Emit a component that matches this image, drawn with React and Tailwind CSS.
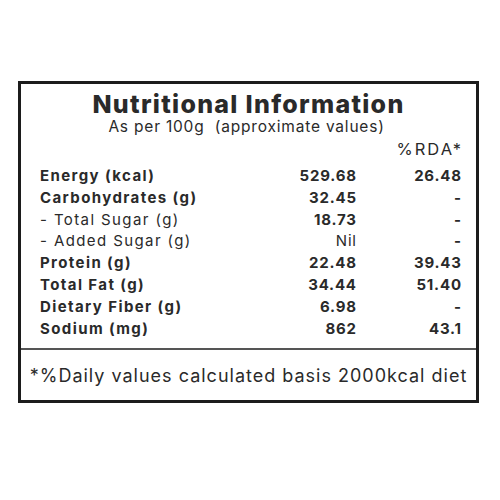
import React from 'react';

const rows = [
  { label: 'Energy (kcal)', value: '529.68', rda: '26.48', bold: true },
  { label: 'Carbohydrates (g)', value: '32.45', rda: '-', bold: true },
  { label: '- Total Sugar (g)', value: '18.73', rda: '-', bold: false },
  { label: '- Added Sugar (g)', value: 'Nil', rda: '-', bold: false },
  { label: 'Protein (g)', value: '22.48', rda: '39.43', bold: true },
  { label: 'Total Fat (g)', value: '34.44', rda: '51.40', bold: true },
  { label: 'Dietary Fiber (g)', value: '6.98', rda: '-', bold: true },
  { label: 'Sodium (mg)', value: '862', rda: '43.1', bold: true },
];

const App = () => {
  return (
    <div className="w-[500px] h-[500px] bg-white pt-[81px] pl-[18px] text-[#2a2a2a]" style={{ fontFamily: 'Inter, "Noto Sans", sans-serif' }}>
      <div className="w-[461px] h-[322px] border-[3px] border-[#1c1c1c] flex flex-col">
        {/* Title */}
        <div className="pt-[7px] text-center">
          <h1 className="text-[25px] leading-[26px] font-extrabold tracking-[1.3px]">Nutritional Information</h1>
          <p className="mt-[1px] text-[15.5px] leading-[17px] tracking-[0.8px] ml-[-4px]">As per 100g&nbsp;&nbsp;(approximate values)</p>
        </div>

        {/* Table */}
        <div className="pl-[19px] pr-[15px] mt-[3px]">
          <div className="flex justify-end h-[22px] items-center text-[16.5px] tracking-[2px] mr-[-2px]">
            <span>%RDA*</span>
          </div>
          <div className="mt-[5px]">
            {rows.map((row) => (
              <div key={row.label} className="grid grid-cols-[1fr_90px_105px] h-[21.8px] items-center text-[15px]">
                <span className={`tracking-[1.4px] ${row.bold ? 'font-bold' : 'font-normal'}`}>{row.label}</span>
                <span className={`text-right tracking-[0.8px] mr-[-0.8px] ${row.value === 'Nil' ? 'font-normal' : 'font-bold'}`}>{row.value}</span>
                <span className="text-right font-bold tracking-[0.8px] mr-[-0.8px]">{row.rda}</span>
              </div>
            ))}
          </div>
        </div>

        {/* Footer */}
        <div className="mt-auto border-t-2 border-[#555] h-[52px] flex items-center justify-center">
          <p className="text-[18px] tracking-[1px]">*%Daily values calculated basis 2000kcal diet</p>
        </div>
      </div>
    </div>
  );
};

export default App;
